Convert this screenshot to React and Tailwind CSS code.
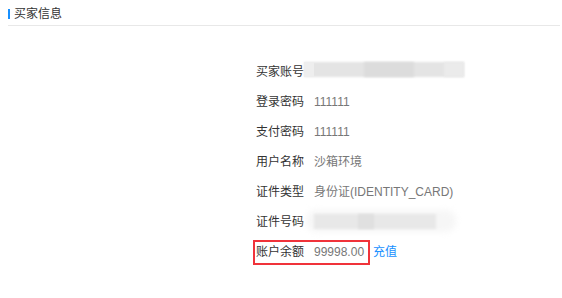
export default function App() {
  const font = { fontFamily: '"Liberation Sans", "Noto Sans CJK SC", sans-serif' };
  const rows = [
    { label: "买家账号", blur: "acct" },
    { label: "登录密码", value: "111111" },
    { label: "支付密码", value: "111111" },
    { label: "用户名称", value: "沙箱环境" },
    { label: "证件类型", value: "身份证(IDENTITY_CARD)" },
    { label: "证件号码", blur: "id" },
  ];
  return (
    <div className="w-[562px] h-[298px] bg-white overflow-hidden" style={font}>
      <div className="pl-[8px] pr-[2px] pt-[7px]">
        <div className="flex items-center h-[14px]">
          <span className="w-[2px] h-[10px] bg-[#1890ff] mr-[4px]"></span>
          <span className="text-[12px] text-[#333] leading-[14px]">买家信息</span>
        </div>
        <div className="mt-[4px] h-px bg-[#e8e8e8]"></div>
      </div>
      <div className="ml-[256px] mt-[31px] flex flex-col">
        {rows.map((r, i) => (
          <div key={i} className="h-[30px] flex items-center text-[12px]">
            <span className="w-[48px] text-[#333]">{r.label}</span>
            {r.value && <span className="ml-[10px] text-[#777]">{r.value}</span>}
            {r.blur === "acct" && (
              <div className="relative w-[160px] h-[16px] -mt-[4px]">
                <div className="absolute left-0 top-0 w-[160px] h-[15px] bg-[#e4e4e4] blur-[1px]"></div>
                <div className="absolute left-[60px] top-0 w-[50px] h-[15px] bg-[#dcdcdc] blur-[1px]"></div>
                <div className="absolute left-0 top-0 w-[10px] h-[15px] bg-[#eeeeee]"></div>
                <div className="absolute left-[140px] top-0 w-[20px] h-[15px] bg-[#ebebeb] blur-[1px]"></div>
              </div>
            )}
            {r.blur === "id" && (
              <div className="relative w-[150px] h-[24px] ml-[6px]">
                <div className="absolute -left-[4px] top-[0px] w-[150px] h-[22px] rounded-[10px] bg-[#f6f6f6] blur-[3px]"></div>
                <div className="absolute left-[4px] top-[4px] w-[122px] h-[15px] bg-[#e8e8e8] blur-[1px]"></div>
                <div className="absolute left-[48px] top-[4px] w-[16px] h-[15px] bg-[#e0e0e0] blur-[1px]"></div>
              </div>
            )}
          </div>
        ))}
        <div className="h-[30px] flex items-center text-[12px]">
          <div className="flex items-center h-[25px] border-2 border-[#f0333a] -ml-[3px] pl-[1px] pr-[4px]">
            <span className="w-[48px] text-[#333]">账户余额</span>
            <span className="ml-[10px] text-[#777]">99998.00</span>
          </div>
          <span className="ml-[3px] text-[#1890ff]">充值</span>
        </div>
      </div>
    </div>
  );
}
